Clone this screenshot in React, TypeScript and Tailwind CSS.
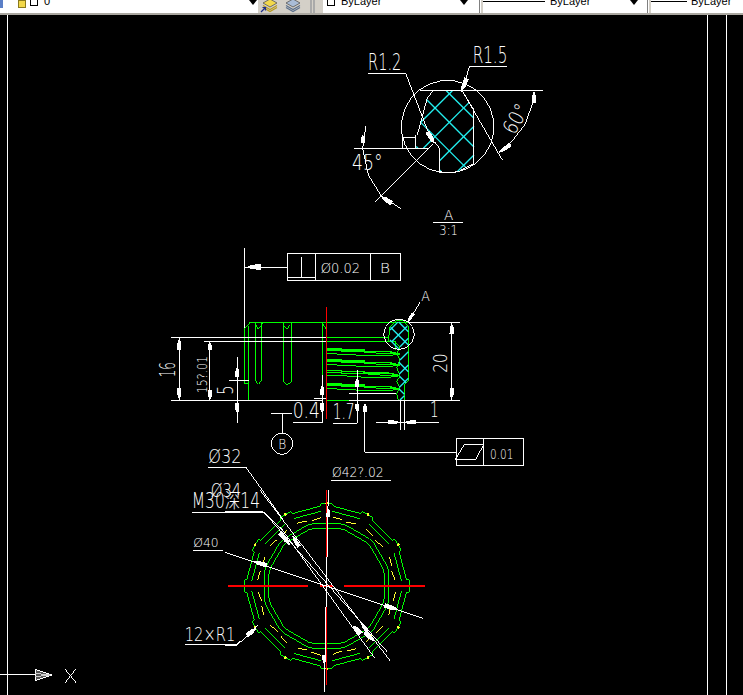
import React from 'react';

// all drawing groups are written in "zoom units" (3 units = 1 px) from a local origin
const Z: React.FC<{ x: number; y: number; children: React.ReactNode }> = ({ x, y, children }) => (
  <g transform={`translate(${x} ${y}) scale(0.33333)`} strokeWidth={3} fill="none" stroke="#fff" shapeRendering="crispEdges">
    {children}
  </g>
);

const L: React.FC<{ p: string; c?: string; w?: number }> = ({ p, c = '#fff', w = 3 }) => (
  <polyline points={p} stroke={c} strokeWidth={w} fill="none" />
);

const T: React.FC<{ x: number; y: number; s: number; w: number; r?: number; children: string }> = ({ x, y, s, w, r, children }) => (
  <text
    x={0}
    y={0}
    transform={`translate(${x} ${y})${r ? ` rotate(${r})` : ''}`}
    fontSize={s}
    fontWeight={200}
    textLength={w}
    lengthAdjust="spacingAndGlyphs"
    fill="#fff"
    stroke="none"
    fontFamily='"DejaVu Sans", "Noto Sans CJK SC", sans-serif'
  >
    {children}
  </text>
);

const Arrow: React.FC<{ a: [number, number]; b: [number, number]; w?: number }> = ({ a, b, w = 13 }) => {
  const dx = b[0] - a[0];
  const dy = b[1] - a[1];
  const l = Math.hypot(dx, dy);
  const nx = (-dy / l) * (w / 2);
  const ny = (dx / l) * (w / 2);
  const pts = [
    [a[0] + nx, a[1] + ny],
    [a[0] + dx * 0.65 + nx * 0.9, a[1] + dy * 0.65 + ny * 0.9],
    [b[0] + nx * 0.2, b[1] + ny * 0.2],
    [b[0] - nx * 0.2, b[1] - ny * 0.2],
    [a[0] + dx * 0.65 - nx * 0.9, a[1] + dy * 0.65 - ny * 0.9],
    [a[0] - nx, a[1] - ny],
  ];
  return <polygon points={pts.map((p) => p.join(',')).join(' ')} fill="#fff" stroke="none" />;
};

const xy = (cx: number, cy: number, r: number, deg: number) => {
  const t = (deg * Math.PI) / 180;
  return [cx + r * Math.cos(t), cy + r * Math.sin(t)];
};
const pt = (cx: number, cy: number, r: number, deg: number) => xy(cx, cy, r, deg).map((v) => v.toFixed(1)).join(',');

const ngon = (cx: number, cy: number, r: number, n: number, rot = 0) =>
  Array.from({ length: n + 1 }, (_, i) => pt(cx, cy, r, rot + (i * 360) / n)).join(' ');

const CX = 305;
const CY = 288;
const GREEN = '#00ff00';
const steps = Array.from({ length: 12 }, (_, i) => i * 30);

const outerRing = steps
  .flatMap((a) => [pt(CX, CY, 240, a - 5), pt(CX, CY, 248, a - 4), pt(CX, CY, 248, a + 4), pt(CX, CY, 240, a + 5)])
  .join(' ');

// flat sides facing 0, 30, 60... with a small chamfer between them
const chamfered = (flat: number) =>
  steps.flatMap((a) => [pt(CX, CY, flat / Math.cos((12 * Math.PI) / 180), a - 12), pt(CX, CY, flat / Math.cos((12 * Math.PI) / 180), a + 12)]).join(' ');

const Rings = () => (
  <>
    <polygon points={outerRing} stroke={GREEN} fill="none" strokeWidth={3} />
    {steps.map((a) => {
      const dot = xy(CX, CY, 248, a);
      return (
        <g key={a}>
          <L p={`${pt(CX, CY, 225, a + 4)} ${pt(CX, CY, 225, a + 26)}`} c={GREEN} />
          <L p={`${pt(CX, CY, 208, a + 5)} ${pt(CX, CY, 204, a + 13)}`} c="#ffff33" />
          <L p={`${pt(CX, CY, 200, a + 17)} ${pt(CX, CY, 206, a + 25)}`} c="#ffff33" />
          <circle cx={dot[0]} cy={dot[1]} r={4} fill="#ffff33" stroke="none" />
        </g>
      );
    })}
    <polygon points={chamfered(187)} stroke={GREEN} strokeWidth={3} />
    <polygon points={chamfered(173)} stroke={GREEN} strokeWidth={3} />
  </>
);

const threadGroup = (y: number, key: number) => (
  <g key={key}>
    <L p={`18,${y} 65,${y} 65,${y + 3} 132,${y + 3} 132,${y + 7} 205,${y + 7} 240,${y + 15}`} c={GREEN} w={4} />
    <L p={`18,${y + 6} 65,${y + 6} 65,${y + 9} 132,${y + 9} 180,${y + 13} 230,${y + 15}`} c={GREEN} w={3} />
    <L p={`18,${y + 14} 80,${y + 16} 135,${y + 20} 205,${y + 20} 240,${y + 15}`} c={GREEN} w={3} />
  </g>
);

type Pt = [number, number];

// cut the line through o along dir by the outline, keep the parts inside
const cutLine = (poly: Pt[], o: Pt, dir: Pt) => {
  const hits: number[] = [];
  poly.forEach((a, i) => {
    const b = poly[(i + 1) % poly.length];
    const ex = b[0] - a[0];
    const ey = b[1] - a[1];
    const den = dir[0] * ey - dir[1] * ex;
    if (Math.abs(den) < 1e-6) return;
    const t = ((a[0] - o[0]) * ey - (a[1] - o[1]) * ex) / den;
    const u = ((a[0] - o[0]) * dir[1] - (a[1] - o[1]) * dir[0]) / den;
    if (u >= 0 && u < 1) hits.push(t);
  });
  hits.sort((p, q) => p - q);
  const segs: [number, number, number, number][] = [];
  for (let i = 0; i + 1 < hits.length; i += 2) {
    segs.push([o[0] + dir[0] * hits[i], o[1] + dir[1] * hits[i], o[0] + dir[0] * hits[i + 1], o[1] + dir[1] * hits[i + 1]]);
  }
  return segs;
};

const Hatch: React.FC<{ poly: Pt[]; gap: number; s: number; d: number }> = ({ poly, gap, s, d }) => {
  const segs: [number, number, number, number][] = [];
  for (let i = -10; i < 10; i++) {
    segs.push(...cutLine(poly, [0, s + i * gap], [1, -1]));
    segs.push(...cutLine(poly, [0, -(d + i * gap)], [1, 1]));
  }
  return (
    <g shapeRendering="geometricPrecision">
      {segs.map((q, i) => (
        <line key={i} x1={q[0]} y1={q[1]} x2={q[2]} y2={q[3]} stroke="#22f0f0" strokeWidth={4} />
      ))}
    </g>
  );
};

const secA: Pt[] = [[262, 188], [280, 167], [360, 167], [368, 170], [402, 225], [402, 385], [355, 410], [323, 413], [298, 410], [298, 340], [228, 340], [232, 300]];
const secB: Pt[] = [[218, 128], [248, 125], [265, 142], [265, 303], [253, 313], [253, 360], [235, 360], [230, 340], [240, 325], [230, 305], [240, 288], [230, 262], [240, 240], [230, 220], [240, 200], [228, 190], [210, 180], [210, 145]];

const DetailA = () => (
  <Z x={340} y={35}>
    <Hatch poly={secA} gap={86} s={590} d={66} />
    <polyline points={ngon(323, 275, 139, 24, 7)} />
    <L p="232,300 262,188 280,167 360,167 368,170 402,225 402,385 355,410 323,413 298,410 298,340 285,322" />
    <L p="228,300 228,340" />
    <L p="188,307 228,307" />
    <L p="188,307 188,340" />
    <L p="42,340 265,340" />
    <L p="240,166 608,166" />
    <L p="84,115 197,115 265,292" />
    <Arrow a={[262, 290]} b={[283, 325]} w={14} />
    <L p="500,95 388,95 366,170" />
    <Arrow a={[380, 130]} b={[365, 168]} w={14} />
    <L p="368,170 487,375" />
    <L p="582,170 578,205 555,268 515,320 480,352" />
    <Arrow a={[583, 205]} b={[582, 170]} w={12} />
    <Arrow a={[512, 328]} b={[478, 352]} w={12} />
    <L p="78,272 68,340 85,420 125,485 182,520" />
    <Arrow a={[69, 325]} b={[68, 300]} w={12} />
    <Arrow a={[155, 505]} b={[125, 485]} w={14} />
    <L p="105,500 280,325" />
    <L p="280,562 368,562" />
    <T x={84} y={105} s={68} w={100}>R1.2</T>
    <T x={398} y={84} s={68} w={104}>R1.5</T>
    <T x={36} y={405} s={62} w={92}>45°</T>
    <T x={523} y={302} s={62} w={92} r={-60}>60°</T>
    <T x={312} y={554} s={40} w={28}>A</T>
    <T x={298} y={600} s={40} w={56}>3:1</T>
  </Z>
);

const MainLeft = () => (
  <Z x={150} y={240}>
    <L p="283,25 283,270" />
    <L p="285,82 412,82" />
    <Arrow a={[332, 81]} b={[293, 81]} w={16} />
    <rect x={412} y={40} width={340} height={82} />
    <L p="497,40 497,122" />
    <L p="662,40 662,122" />
    <L p="455,50 455,112" />
    <L p="412,112 497,112" />
    <T x={512} y={100} s={44} w={118}>Ø0.02</T>
    <T x={690} y={98} s={44} w={30}>B</T>

    <L p="283,268 300,247 900,247" c={GREEN} />
    <L p="283,268 283,430 295,430" c={GREEN} />
    <L p="295,258 295,481" c={GREEN} />
    <path d="M316 250V422L325 433L335 422V250M316 252L325 268L338 250" stroke={GREEN} />
    <path d="M400 250V425L412 434L425 425V250M400 255L410 268L420 255" stroke={GREEN} />
    <L p="517,247 517,481" c={GREEN} />
    <L p="517,250 529,268" c={GREEN} />
    <L p="529,202 529,537" c="#ff0000" w={4} />

    <L p="64,292 570,292" />
    <L p="163,304 570,304" />
    <L p="64,481 520,481" />
    <L p="88,292 88,481" />
    <Arrow a={[88, 330]} b={[88, 298]} />
    <Arrow a={[88, 445]} b={[88, 476]} />
    <L p="179,304 179,481" />
    <Arrow a={[180, 330]} b={[180, 308]} />
    <Arrow a={[180, 450]} b={[180, 476]} />
    <L p="262,352 262,550" />
    <Arrow a={[262, 412]} b={[262, 382]} />
    <Arrow a={[262, 490]} b={[262, 520]} />
    <L p="237,421 296,421" />
    <T x={74} y={412} s={62} w={46} r={-90}>16</T>
    <T x={172} y={460} s={44} w={112} r={-90}>15?.01</T>
    <T x={248} y={464} s={62} w={28} r={-90}>5</T>

    <T x={428} y={535} s={62} w={82}>0.4</T>
    <L p="430,549 518,549 518,405" />
    <Arrow a={[517, 466]} b={[517, 436]} />
    <Arrow a={[517, 490]} b={[517, 518]} />
    <L p="493,475 530,475" />
    <L p="363,520 425,520" />
    <L p="397,520 397,580" />
    <polyline points={ngon(396, 611, 32, 16, 11)} />
    <T x={385} y={626} s={42} w={24}>B</T>
  </Z>
);

const MainRight = () => (
  <Z x={320} y={280}>
    <L p="20,172 205,172" c={GREEN} />
    <L p="20,184 205,184" c={GREEN} />
    <L p="7,127 220,127" c={GREEN} />
    <L p="0,172 20,172" />
    <L p="0,184 20,184" />
    {[207, 240, 272, 312].map((y, i) => threadGroup(y, i))}
    <L p="18,361 87,361" c={GREEN} />
    <L p="87,340 232,340" />
    <L p="205,165 205,184 228,184 228,210" c={GREEN} />
    <L p="210,140 230,122 250,122 265,140 265,303 253,313 253,361 235,361 230,340 240,325 230,305 240,288 230,262 240,240 230,220 240,200 228,190" c={GREEN} />
    <L p="210,140 208,165" c={GREEN} />
    <Hatch poly={secB} gap={40} s={360} d={70} />
    <L p="19,82 19,415" c="#ff0000" w={4} />
    <polyline points={ngon(237, 163, 46, 12, 0)} />
    <L p="300,67 265,125" />
    <Arrow a={[280, 100]} b={[264, 125]} w={10} />
    <T x={304} y={62} s={44} w={26}>A</T>

    <L p="265,127 420,127" />
    <L p="87,361 420,361" />
    <L p="395,127 395,361" />
    <Arrow a={[395, 162]} b={[395, 132]} />
    <Arrow a={[395, 323]} b={[395, 355]} />
    <T x={382} y={278} s={60} w={58} r={-90}>20</T>

    <L p="241,361 241,450" />
    <L p="253,361 253,450" />
    <L p="168,427 356,427" />
    <Arrow a={[205, 427]} b={[238, 427]} w={12} />
    <Arrow a={[288, 427]} b={[256, 427]} w={12} />
    <T x={330} y={412} s={62} w={26}>1</T>

    <T x={38} y={416} s={62} w={66}>1.7</T>
    <L p="38,430 112,430 112,270" />
    <Arrow a={[112, 320]} b={[112, 296]} />
    <Arrow a={[112, 372]} b={[112, 396]} />
    <Arrow a={[135, 395]} b={[135, 372]} />
    <L p="135,378 135,517 408,517" />
    <rect x={409} y={475} width={201} height={83} />
    <L p="490,475 490,558" />
    <L p="432,495 490,495 468,538 406,538 432,495" />
    <T x={510} y={537} s={44} w={70}>0.01</T>

    <T x={36} y={592} s={44} w={155}>Ø42?.02</T>
    <L p="34,603 213,603" />
  </Z>
);

const Ring = () => (
  <Z x={225} y={490}>
    <Rings />
    <L p="10,288 248,288" c="#ff0000" w={4} />
    <L p="285,288 325,288" c="#ff0000" w={4} />
    <L p="357,288 600,288" c="#ff0000" w={4} />
    <L p="305,0 305,228" c="#ff0000" w={4} />
    <L p="305,350 305,585" c="#ff0000" w={4} />
    <L p="310,0 298,605" />
    <L p="0,187 593,385" />
    <L p="105,0 495,512" />
    <L p="0,65 115,65 488,487" />
    <L p="165,110 448,503" />
    <Arrow a={[310, 82]} b={[310, 56]} w={12} />
    <Arrow a={[298, 495]} b={[298, 522]} w={12} />
    <Arrow a={[165, 128]} b={[195, 165]} w={14} />
    <Arrow a={[222, 170]} b={[203, 138]} w={12} />
    <Arrow a={[125, 226]} b={[85, 214]} w={14} />
    <Arrow a={[478, 346]} b={[520, 360]} w={14} />
    <Arrow a={[408, 432]} b={[385, 408]} w={14} />
    <Arrow a={[428, 425]} b={[410, 402]} w={12} />
    <Arrow a={[420, 425]} b={[445, 452]} w={14} />
    <L p="0,466 36,466 100,405" />
    <Arrow a={[65, 437]} b={[92, 415]} w={14} />
  </Z>
);

const LeftLabels = () => (
  <Z x={170} y={440}>
    <T x={115} y={68} s={60} w={100}>Ø32</T>
    <L p="115,82 228,82 340,240" />
    <T x={122} y={170} s={60} w={92}>Ø34</T>
    <T x={65} y={203} s={62} w={205}>M30深14</T>
    <L p="67,217 283,217 340,275" />
    <T x={70} y={320} s={38} w={76}>Ø40</T>
    <L p="70,333 158,333" />
  </Z>
);

const Ucs = () => (
  <Z x={0} y={620}>
    <L p="0,165 105,165" />
    <polygon points="106,148 155,165 106,182" stroke="#fff" fill="#555" />
    <L p="106,160 150,165 106,170" c="#ccc" />
    <L p="194,146 230,190" />
    <L p="228,146 194,190" />
    <T x={554} y={62} s={60} w={152}>12×R1</T>
    <L p="554,75 708,75 720,64" />
  </Z>
);

const Layers: React.FC<{ tint: string; pointer?: boolean }> = ({ tint, pointer }) => (
  <svg width="18" height="13" viewBox="0 0 18 13" className="shrink-0">
    <path d="M3 3 10-1l7 4-7 4Z" fill={tint} stroke="#555" strokeWidth=".8" />
    <path d="M3 5.5 10 9.5l7-4M3 7.5 10 11.5l7-4" fill="none" stroke={pointer ? '#b89b1e' : '#5a6f8c'} strokeWidth="1.2" />
    {pointer && <path d="M1 12 5 8M2.5 7.5H5.5V10.5" fill="none" stroke="#1d2f8a" strokeWidth="1.2" />}
  </svg>
);

const Dropdown = ({ className }: { className: string }) => (
  <span className={`w-0 h-0 border-l-[4px] border-r-[4px] border-t-[5px] border-l-transparent border-r-transparent border-t-black shrink-0 ${className}`} />
);

const Sep = () => <span className="w-[2px] h-[13px] bg-[#808080] border-r border-white shrink-0" />;

const LineSwatch = ({ w }: { w: number }) => <span className="h-px mt-[1px] bg-black shrink-0" style={{ width: w }} />;

const Toolbar = () => (
  <div
    className="h-[15px] shrink-0 flex items-start bg-[#d4d0c8] border-b-2 border-[#aaa7a0] overflow-hidden text-[11px] leading-[11px] text-black"
    style={{ fontFamily: '"Liberation Sans", Arial, sans-serif' }}
  >
    <div className="w-[258px] h-full bg-white flex items-start shrink-0">
      <span className="w-[3px] h-[8px] bg-[#5b7fc7] shrink-0" />
      <span className="w-[8px] h-[8px] ml-[15px] bg-[#f2d84b] border border-[#8a7a1e] shrink-0" />
      <span className="w-[8px] h-[6px] ml-[4px] border border-black border-t-0 bg-white shrink-0" />
      <span className="ml-[6px] -mt-[4px]">0</span>
      <Dropdown className="ml-[199px]" />
    </div>
    <div className="w-[50px] flex items-start gap-[5px] pl-[2px] shrink-0">
      <Layers tint="#f2d84b" pointer />
      <Layers tint="#a9bcd6" />
    </div>
    <span className="w-[2px] h-[13px] bg-[#aaa] ml-[2px] shrink-0" />
    <span className="w-[2px] h-[13px] bg-[#aaa] ml-[1px] shrink-0" />
    <div className="w-[156px] ml-[8px] h-full bg-white flex items-start shrink-0">
      <span className="w-[8px] h-[6px] border border-black border-t-0 ml-[4px] shrink-0" />
      <span className="ml-[6px] -mt-[4px]">ByLayer</span>
      <Dropdown className="ml-[79px]" />
    </div>
    <Sep />
    <div className="w-[164px] ml-[2px] h-full bg-white flex items-start shrink-0">
      <LineSwatch w={62} />
      <span className="ml-[5px] -mt-[4px]">ByLayer</span>
      <Dropdown className="ml-[40px]" />
    </div>
    <Sep />
    <div className="flex-1 ml-[2px] h-full bg-white flex items-start">
      <LineSwatch w={36} />
      <span className="ml-[4px] -mt-[4px]">ByLayer</span>
    </div>
  </div>
);

export default function App() {
  return (
    <div className="w-[743px] h-[695px] flex flex-col bg-black overflow-hidden">
      <Toolbar />
      <div className="flex-1 min-h-0">
        <svg viewBox="0 15 743 680" className="block w-full h-full opacity-[.999]">
          <g stroke="#fff" strokeWidth={1} shapeRendering="crispEdges">
            <line x1={7.5} y1={15} x2={7.5} y2={695} />
            <line x1={707.5} y1={15} x2={707.5} y2={695} />
            <line x1={726.5} y1={15} x2={726.5} y2={695} />
          </g>
          <DetailA />
          <MainLeft />
          <MainRight />
          <Ring />
          <LeftLabels />
          <Ucs />
        </svg>
      </div>
    </div>
  );
}
